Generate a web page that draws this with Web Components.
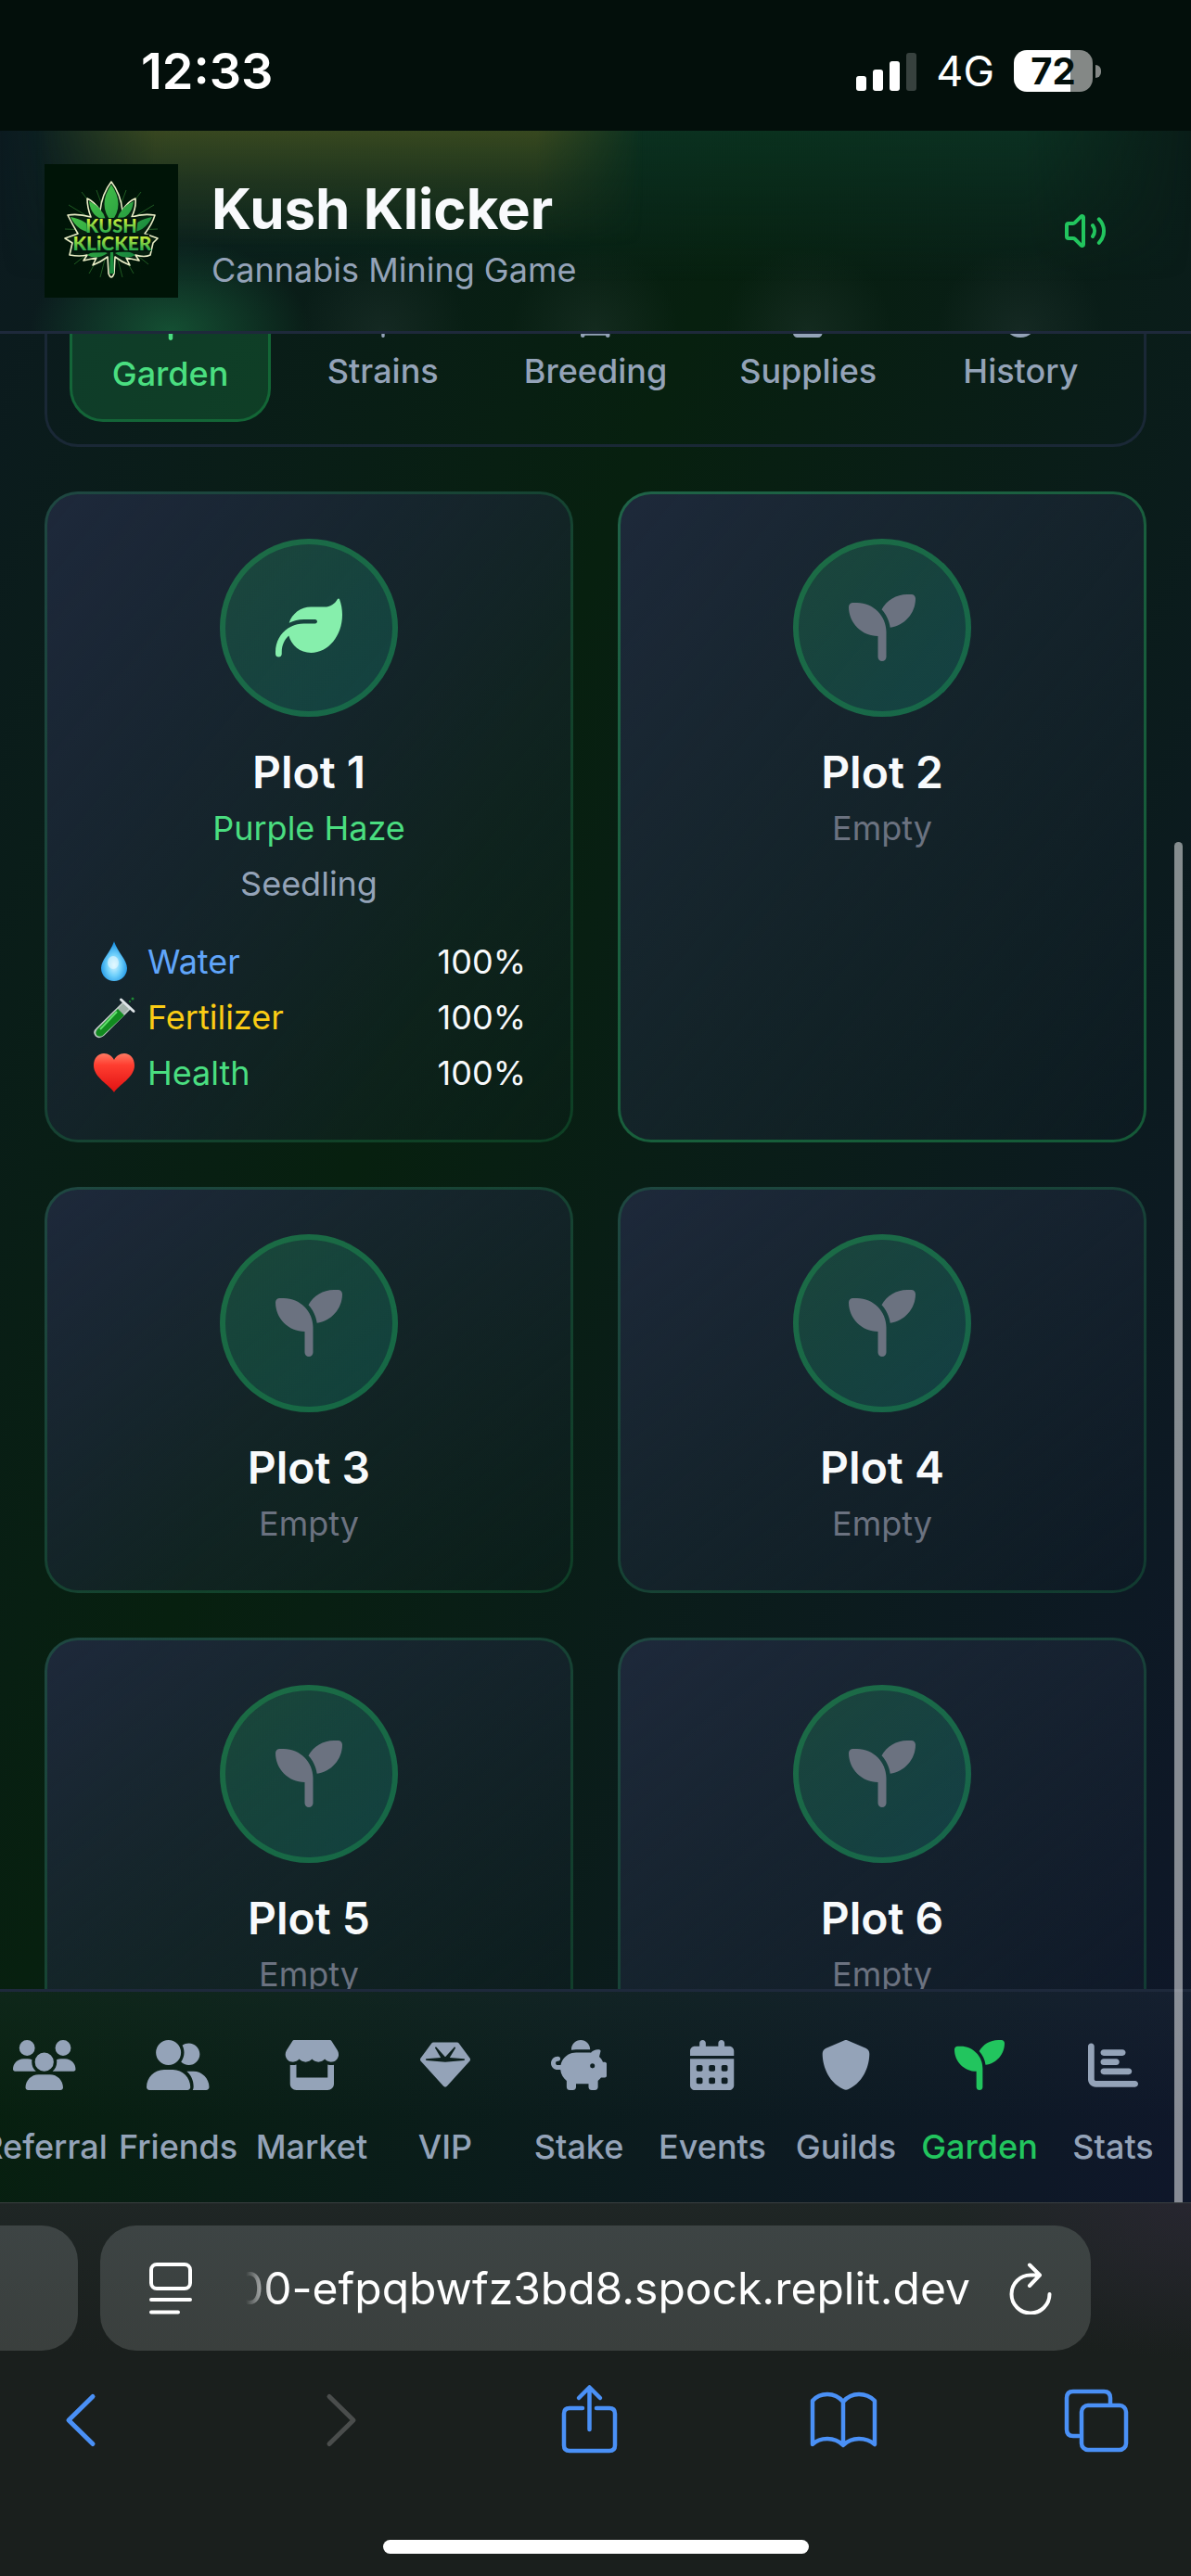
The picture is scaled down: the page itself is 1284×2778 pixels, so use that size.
<!DOCTYPE html>
<html lang="en">
<head>
<meta charset="utf-8">
<meta name="viewport" content="width=device-width, initial-scale=1">
<title>Kush Klicker</title>
<style>
  html, body { margin: 0; height: 100%; }
  body { background: #030f0b; font-family: Inter, "Noto Sans", sans-serif; color: #f8fafc; }
</style>
</head>
<body>
<kk-app></kk-app>

<script>
const FA = {
  seedling: [512, 'M512 32c0 113.6-84.6 207.5-194.2 222c-7.1-53.4-30.6-101.6-65.3-139.3C290.8 46.3 364 0 448 0h32c17.7 0 32 14.3 32 32zM0 96C0 78.3 14.3 64 32 64H64c123.7 0 224 100.3 224 224v32V480c0 17.7-14.3 32-32 32s-32-14.3-32-32V320C100.3 320 0 219.7 0 96z'],
  leaf: [512, 'M272 96c-78.6 0-145.1 51.5-167.7 122.5c33.6-17 71.5-26.5 111.7-26.5h88c8.8 0 16 7.2 16 16s-7.2 16-16 16H216c-16.6 0-32.7 1.9-48.3 5.4c-25.9 5.9-49.9 16.4-71.4 30.7C38.3 298.8 0 364.9 0 440v16c0 13.3 10.7 24 24 24s24-10.7 24-24V440c0-48.7 20.7-92.5 53.8-123.2C121.6 392.3 190.3 448 272 448l1 0c132.1-.7 239-130.9 239-291.4c0-42.6-7.5-83.1-21.1-119.6c-2.6-6.9-12.7-6.6-16.2-.1C455.9 72.1 418.7 96 376 96L272 96z'],
  gem: [512, 'M116.7 33.8c4.5-6.1 11.7-9.8 19.3-9.8H376c7.6 0 14.8 3.6 19.3 9.8l112 152c6.8 9.2 6.1 21.9-1.5 30.4l-232 256c-4.5 5-11 7.9-17.8 7.9s-13.2-2.9-17.8-7.9l-232-256c-7.7-8.5-8.3-21.2-1.5-30.4l112-152zm38.5 39.8c-3.3 2.5-4.2 7-2.1 10.5l57.4 95.6L63.3 192c-4.1 .3-7.3 3.8-7.3 8s3.2 7.6 7.3 8l192 16c.4 0 .9 0 1.3 0l192-16c4.1-.3 7.3-3.8 7.3-8s-3.2-7.6-7.3-8L301.5 179.8l57.4-95.6c2.1-3.5 1.2-8.1-2.1-10.5s-7.9-2-10.7 1L256 172.2 165.9 74.6c-2.8-3-7.4-3.4-10.7-1z'],
  shield: [512, 'M269.4 2.9C265.2 1 260.7 0 256 0s-9.2 1-13.4 2.9L54.3 82.8c-22 9.3-38.4 31-38.3 57.2c.5 99.2 41.3 280.7 213.6 363.2c16.7 8 36.1 8 52.8 0C454.7 420.7 495.5 239.2 496 140c.1-26.2-16.3-47.9-38.3-57.2L269.4 2.9z'],
  calendar: [448, 'M128 0c17.7 0 32 14.3 32 32V64H288V32c0-17.7 14.3-32 32-32s32 14.3 32 32V64h48c26.5 0 48 21.5 48 48v48H0V112C0 85.5 21.5 64 48 64H96V32c0-17.7 14.3-32 32-32zM0 192H448V464c0 26.5-21.5 48-48 48H48c-26.5 0-48-21.5-48-48V192zm64 80v32c0 8.8 7.2 16 16 16h32c8.8 0 16-7.2 16-16V272c0-8.8-7.2-16-16-16H80c-8.8 0-16 7.2-16 16zm128 0v32c0 8.8 7.2 16 16 16h32c8.8 0 16-7.2 16-16V272c0-8.8-7.2-16-16-16H208c-8.8 0-16 7.2-16 16zm144-16c-8.8 0-16 7.2-16 16v32c0 8.8 7.2 16 16 16h32c8.8 0 16-7.2 16-16V272c0-8.8-7.2-16-16-16H336zM64 400v32c0 8.8 7.2 16 16 16h32c8.8 0 16-7.2 16-16V400c0-8.8-7.2-16-16-16H80c-8.8 0-16 7.2-16 16zm144-16c-8.8 0-16 7.2-16 16v32c0 8.8 7.2 16 16 16h32c8.8 0 16-7.2 16-16V400c0-8.8-7.2-16-16-16H208zm112 16v32c0 8.8 7.2 16 16 16h32c8.8 0 16-7.2 16-16V400c0-8.8-7.2-16-16-16H336c-8.8 0-16 7.2-16 16z'],
  chart: [512, 'M32 32c17.7 0 32 14.3 32 32V400c0 8.8 7.2 16 16 16H480c17.7 0 32 14.3 32 32s-14.3 32-32 32H80c-44.2 0-80-35.8-80-80V64C0 46.3 14.3 32 32 32zm96 96c0-17.7 14.3-32 32-32l192 0c17.7 0 32 14.3 32 32s-14.3 32-32 32l-192 0c-17.7 0-32-14.3-32-32zm32 64H288c17.7 0 32 14.3 32 32s-14.3 32-32 32H160c-17.7 0-32-14.3-32-32s14.3-32 32-32zm0 96H416c17.7 0 32 14.3 32 32s-14.3 32-32 32H160c-17.7 0-32-14.3-32-32s14.3-32 32-32z'],
  friends: [640, 'M96 128a128 128 0 1 1 256 0A128 128 0 1 1 96 128zM0 482.3C0 383.8 79.8 304 178.3 304h91.4C368.2 304 448 383.8 448 482.3c0 16.4-13.3 29.7-29.7 29.7H29.7C13.3 512 0 498.7 0 482.3zM609.3 512H471.4c5.4-9.4 8.6-20.3 8.6-32v-8c0-60.7-27.1-115.2-69.8-151.8c2.4-.1 4.7-.2 7.1-.2h61.4C567.8 320 640 392.2 640 481.3c0 17-13.8 30.7-30.7 30.7zM432 256c-31 0-59-12.6-79.3-32.9C372.4 196.5 384 163.6 384 128c0-26.8-6.6-52.1-18.3-74.3C384.3 40.1 407.2 32 432 32c61.9 0 112 50.1 112 112s-50.1 112-112 112z'],
  users: [640, 'M144 0a80 80 0 1 1 0 160A80 80 0 1 1 144 0zM512 0a80 80 0 1 1 0 160A80 80 0 1 1 512 0zM0 298.7C0 239.8 47.8 192 106.7 192h42.7c15.9 0 31 3.5 44.6 9.7c-1.3 7.2-1.9 14.7-1.9 22.3c0 38.2 16.8 72.5 43.3 96c-.2 0-.4 0-.7 0H21.3C9.6 320 0 310.4 0 298.7zM405.3 320c-.2 0-.4 0-.7 0c26.6-23.5 43.3-57.8 43.3-96c0-7.6-.7-15-1.9-22.3c13.6-6.3 28.7-9.7 44.6-9.7h42.7C592.2 192 640 239.8 640 298.7c0 11.8-9.6 21.3-21.3 21.3H405.3zM224 224a96 96 0 1 1 192 0 96 96 0 1 1 -192 0zM128 485.3C128 411.7 187.7 352 261.3 352H378.7C452.3 352 512 411.7 512 485.3c0 14.7-11.9 26.7-26.7 26.7H154.7c-14.7 0-26.7-11.9-26.7-26.7z'],
  store: [576, 'M547.6 103.8L490.3 13.1C485.2 5 476.1 0 466.4 0H109.6C99.9 0 90.8 5 85.7 13.1L28.3 103.8c-29.6 46.8-3.4 111.9 51.9 119.4c4 .5 8.1 .8 12.1 .8c26.1 0 49.3-11.4 65.2-29c15.9 17.6 39.1 29 65.2 29c26.1 0 49.3-11.4 65.2-29c15.9 17.6 39.1 29 65.2 29c26.2 0 49.3-11.4 65.2-29c16 17.6 39.1 29 65.2 29c4.1 0 8.1-.3 12.1-.8c55.5-7.4 81.8-72.5 52.1-119.4zM499.7 254.9l-.1 0c-5.3 .7-10.7 1.1-16.2 1.1c-12.4 0-24.3-1.9-35.4-5.3V384H128V250.6c-11.2 3.5-23.2 5.4-35.6 5.4c-5.5 0-11-.4-16.3-1.1l-.1 0c-4.1-.6-8.1-1.3-12-2.3V384v64c0 35.3 28.7 64 64 64H448c35.3 0 64-28.7 64-64V384 252.6c-4 1-8 1.8-12.3 2.3z'],
  piggy: [576, 'M400 96l0 .7c-5.3-.4-10.6-.7-16-.7H256c-16.5 0-32.5 2.1-47.8 6c-.1-2-.2-4-.2-6c0-53 43-96 96-96s96 43 96 96zm-16 32c3.5 0 7 .1 10.4 .3c4.2 .3 8.4 .7 12.6 1.3C424.6 109.1 450.8 96 480 96h11.5c10.4 0 18 9.8 15.5 19.9l-13.8 55.2c15.8 14.8 28.7 32.8 37.5 52.9H544c17.7 0 32 14.3 32 32v96c0 17.7-14.3 32-32 32H512c-9.1 12.1-19.9 22.9-32 32v64c0 17.7-14.3 32-32 32H416c-17.7 0-32-14.3-32-32V448H256v32c0 17.7-14.3 32-32 32H192c-17.7 0-32-14.3-32-32V416c-34.9-26.2-58.7-66.3-63.2-112H68c-37.6 0-68-30.4-68-68s30.4-68 68-68h4c13.3 0 24 10.7 24 24s-10.7 24-24 24H68c-11 0-20 9-20 20s9 20 20 20H99.2c12.1-59.8 57.7-107.5 116.3-122.8c12.9-3.4 26.5-5.2 40.5-5.2H384zm64 136a24 24 0 1 0 -48 0 24 24 0 1 0 48 0z'],
  cannabis: [512, 'M256 0C285 50 304 120 300 200C340 150 400 110 450 100C440 160 400 230 350 270C410 270 460 290 500 320C450 350 390 360 330 345C345 365 360 395 365 420C330 415 300 395 280 370V490C280 520 232 520 232 490V370C212 395 182 415 147 420C152 395 167 365 182 345C122 360 62 350 12 320C52 290 102 270 162 270C112 230 72 160 62 100C112 110 172 150 212 200C208 120 227 50 256 0z'],
  dna: [448, 'M0 32C0-10 64-10 64 32H384C384-10 448-10 448 32C448 140 380 210 300 256C380 302 448 372 448 480C448 522 384 522 384 480H64C64 522 0 522 0 480C0 372 68 302 148 256C68 210 0 140 0 32zM90 96C120 150 170 190 224 220C278 190 328 150 358 96zM224 292C170 322 120 362 85 448H363C328 362 278 322 224 292z'],
  bottle: [448, 'M40 0H408C430 0 448 18 448 40V88C448 110 430 128 408 128H40C18 128 0 110 0 88V40C0 18 18 0 40 0zM0 160H448V448C448 483 419 512 384 512H64C29 512 0 483 0 448z'],
  clock: [512, 'M256 0a256 256 0 1 1 0 512A256 256 0 1 1 256 0zM232 120V256c0 8 4 15.5 10.7 20l96 64c11 7.400 26 4.400 33.300-6.700s4.400-26-6.700-33.300L280 243.200V120c0-13.300-10.700-24-24-24s-24 10.700-24 24z']
};

const LINE = {
  volume: ['0 0 24 24', '<path d="M11 4.700a.7.7 0 0 0-1.200-.500L6.400 7.600A1.400 1.400 0 0 1 5.400 8H3a1 1 0 0 0-1 1v6a1 1 0 0 0 1 1h2.400a1.400 1.400 0 0 1 1 .400l3.400 3.400a.7.7 0 0 0 1.200-.500zM16 9a5 5 0 0 1 0 6M19.400 18.400a9 9 0 0 0 0-12.700" stroke-width="2"/>'],
  reader: ['0 0 46 56', '<rect x="2" y="2" width="42" height="26" rx="6" stroke-width="4"/><path d="M2 40H44M2 53.500H31" stroke-width="4"/>'],
  reload: ['0 0 46 56', '<path d="M29 13.500H23A20.500 20.500 0 1 0 43.500 34M22 2.500L33 13.500L22 25" stroke-width="4"/>'],
  back: ['0 0 80 80', '<path d="M53 14.500L27 40L53 65.500" stroke-width="5"/>'],
  forward: ['0 0 80 80', '<path d="M34 14.500L60 40L34 65.500" stroke-width="5"/>'],
  share: ['0 0 80 80', '<path d="M34 27H20Q14 27 14 33V67Q14 73 20 73H63Q69 73 69 67V33Q69 27 63 27H49M41.500 50V5M30 16L41.500 4.500L53 16" stroke-width="4.500"/>'],
  book: ['0 0 80 80', '<path d="M41 20Q34 12 24 12Q14 12 8 19V66Q14 60 24 60Q34 60 41 67Q48 60 58 60Q68 60 75 66V19Q68 12 58 12Q48 12 41 20V66" stroke-width="4.500"/>'],
  tabs: ['0 0 80 80', '<path d="M22 57H16Q9 57 9 50V16Q9 9 16 9H49Q56 9 56 16V23"  stroke-width="4.500"/><rect x="25" y="24" width="48" height="48" rx="7" stroke-width="4.500"/>']
};

const ART = {
  drop: '<svg viewBox="0 0 48 48"><defs><radialGradient id="g" cx=".5" cy=".6" r=".6"><stop offset="0" stop-color="#d9f6ff"/><stop offset=".45" stop-color="#6fd0fb"/><stop offset="1" stop-color="#0a86e0"/></radialGradient></defs><path d="M24 2C27 13 38 22 38 31A14 14 0 0 1 10 31C10 22 21 13 24 2z" fill="url(#g)"/><ellipse cx="23" cy="25" rx="6" ry="7" fill="#eafaff" opacity=".6"/></svg>',
  tube: '<svg viewBox="0 0 48 48"><path d="M34 8L41 15L12.500 43.500Q8 47 4.500 44Q1 40 5 36.500z" fill="#9fb0a8" stroke="#c4cfca" stroke-width="1.500"/><path d="M28 15L35 22L12 43.500Q8.500 46 5.500 43.500Q3 41 6 37z" fill="#118a1f"/><path d="M27 18L9 37" stroke="#5fe06a" stroke-width="2" fill="none"/><path d="M31.500 5L45 17.500" stroke="#dfe5e8" stroke-width="3" stroke-linecap="round"/><circle cx="44" cy="4" r="1.500" fill="#1f8a34"/><circle cx="41" cy="7" r="1" fill="#1f8a34"/></svg>',
  heart: '<svg viewBox="0 0 48 48"><defs><linearGradient id="h" x1="0" y1="0" x2="0" y2="1"><stop offset="0" stop-color="#ff7a62"/><stop offset=".3" stop-color="#ff3d30"/><stop offset="1" stop-color="#e01212"/></linearGradient></defs><path d="M24 45C19 37 2 29 2 16C2 8 7 3 13 3C18 3 22 6 24 10C26 6 30 3 35 3C41 3 46 8 46 16C46 29 29 37 24 45z" fill="url(#h)"/></svg>'
};

function define(name, html, setup) {
  const tpl = document.createElement('template');
  customElements.define(name, class extends HTMLElement {
    constructor() {
      super();
      this.attachShadow({ mode: 'open' });
    }
    connectedCallback() {
      tpl.innerHTML = '<style>*{box-sizing:border-box}</style>' + (typeof html === 'function' ? html(this) : html);
      this.shadowRoot.replaceChildren(tpl.content.cloneNode(true));
      if (setup) setup(this.shadowRoot, this);
    }
  });
}

define('kk-icon', el => {
  const name = el.getAttribute('name');
  const css = '<style>:host{display:flex;flex:none}svg{display:block;height:var(--icon-size,54px);width:auto}</style>';
  if (FA[name]) {
    return css + `<svg viewBox="0 0 ${FA[name][0]} 512" fill="currentColor" fill-rule="evenodd" aria-hidden="true"><path d="${FA[name][1]}"/></svg>`;
  }
  if (ART[name]) return css + ART[name];
  return css + `<svg viewBox="${LINE[name][0]}" fill="none" stroke="currentColor" stroke-linecap="round" stroke-linejoin="round" aria-hidden="true">${LINE[name][1]}</svg>`;
});

define('kk-logo', `
<style>
  :host { display: block; flex: none; width: 144px; height: 144px; background: #001407; }
  svg { display: block; width: 100%; height: 100%; }
  text { font-family: Lato, Inter, sans-serif; font-weight: 900; text-anchor: middle; }
</style>
<svg viewBox="0 0 144 144" role="img" aria-label="Kush Klicker logo">
  <defs>
    <linearGradient id="l" x1="0" y1="0" x2="1" y2="1"><stop offset="0" stop-color="#4fd04a"/><stop offset="1" stop-color="#08733a"/></linearGradient>
    <linearGradient id="t" x1="0" y1="0" x2="0" y2="1"><stop offset=".25" stop-color="#c9ee3c"/><stop offset=".8" stop-color="#2fae4c"/></linearGradient>
    <radialGradient id="b"><stop offset="0" stop-color="#0b3a15"/><stop offset="1" stop-color="#001407" stop-opacity="0"/></radialGradient>
  </defs>
  <circle cx="72" cy="74" r="58" fill="url(#b)" opacity=".5"/>
  <path d="M72 72L88 28M72 72L56 28M72 72L104 30M72 72L40 30M72 72L118 44M72 72L26 44M72 72L122 70M72 72L22 70M72 76L112 108M72 76L32 108M72 76L96 118M72 76L48 118M72 76L84 122M72 76L60 122" stroke="#1f5a22" stroke-width="1"/>
  <g stroke="#e9edc6" stroke-width="1.600" stroke-linejoin="round" fill="#07210f">
    <path d="M72 19Q62 32 60 50Q53 40 46 37Q46 47 50 57Q36 53 25 55Q30 65 36 75L22 80L30 85L27 98Q38 100 46 98L42 104L56 101L52 109Q60 106 68 100L69 118Q72 126 75 118L76 100Q84 106 92 109L88 101L102 104L98 98Q108 101 114 98L117 85L122 80L108 75Q116 65 119 55Q106 53 94 57Q99 47 98 37Q90 40 84 50Q82 32 72 19z"/>
  </g>
  <g fill="url(#l)">
    <path d="M72 22Q57 44 72 62Q87 44 72 22zM48 40Q50 58 66 60Q62 46 48 40zM96 40Q94 58 78 60Q82 46 96 40zM28 57Q36 74 54 74Q46 60 28 57zM116 57Q108 74 90 74Q98 60 116 57zM46 98Q58 90 68 96Q56 104 46 98zM98 98Q86 90 76 96Q88 104 98 98zM71 94h3l1 24h-5z"/>
  </g>
  <path d="M45 59L101 57L99 75L113 76L115 94L30 96L32 78L46 75z" fill="#03180d"/>
  <text x="72" y="74" font-size="20" fill="url(#t)">KUSH</text>
  <text x="73" y="93" font-size="21" fill="url(#t)">KLiCKER</text>
</svg>`);

define('kk-status-bar', `
<style>
  :host { display: flex; align-items: center; justify-content: space-between; height: 141px; flex: none; padding: 12px 97px 0 152px; color: #fff; background: #030f0b; }
  time { font-size: 54px; line-height: 60px; font-weight: 600; }
  .right { display: flex; align-items: center; gap: 21px; }
  .bars { display: flex; align-items: flex-end; gap: 7px; height: 42px; }
  .bars i { width: 11px; border-radius: 3px; background: #fff; }
  .bars i:nth-child(1) { height: 16px } .bars i:nth-child(2) { height: 23px }
  .bars i:nth-child(3) { height: 32px } .bars i:nth-child(4) { height: 41px; background: #37413e }
  .net { font-size: 45px; line-height: 48px; font-weight: 400; }
  .batt { display: flex; align-items: center; gap: 3px; }
  .cell { display: flex; align-items: center; justify-content: center; width: 85px; height: 45px; border-radius: 14px; background: linear-gradient(90deg, #fff 72%, #848886 72%); color: #030f0b; font-size: 40px; line-height: 45px; font-weight: 700; }
  .nub { width: 6px; height: 14px; border-radius: 0 7px 7px 0; background: #848886; }
</style>
<time>12:33</time>
<div class="right">
  <div class="bars"><i></i><i></i><i></i><i></i></div>
  <span class="net">4G</span>
  <div class="batt"><span class="cell">72</span><span class="nub"></span></div>
</div>`);

define('kk-header', `
<style>
  :host { display: flex; align-items: center; gap: 36px; flex: none; padding: 36px 48px; border-bottom: 3px solid #1e293b; position: relative;
    background:
      radial-gradient(ellipse 150px 100px at 183px 100%, rgba(30,130,75,.5), transparent),
      radial-gradient(ellipse 90px 90px at 412px 100%, rgba(90,110,110,.14), transparent),
      radial-gradient(ellipse 90px 90px at 641px 100%, rgba(90,110,110,.14), transparent),
      radial-gradient(ellipse 90px 90px at 871px 100%, rgba(90,110,110,.14), transparent),
      radial-gradient(ellipse 90px 90px at 1100px 100%, rgba(90,110,110,.14), transparent); }
  :host::before, :host::after { content: ""; position: absolute; inset: 0; pointer-events: none; }
  :host::before { background: linear-gradient(180deg, rgba(14,66,46,.5), rgba(12,56,40,.35) 35%, transparent 75%);
    -webkit-mask-image: linear-gradient(90deg, transparent, #000 14%, #000 86%, transparent);
    mask-image: linear-gradient(90deg, transparent, #000 14%, #000 86%, transparent); }
  :host::after { background: linear-gradient(180deg, rgba(78,84,30,.66), rgba(64,72,30,.4) 25%, transparent 58%);
    -webkit-mask-image: linear-gradient(90deg, transparent 3%, #000 13%, #000 45%, transparent 54%);
    mask-image: linear-gradient(90deg, transparent 3%, #000 13%, #000 45%, transparent 54%); }
  kk-logo, .titles, button { position: relative; z-index: 1; }
  .titles { flex: 1; min-width: 0; }
  h1 { margin: 0; font-size: 60px; line-height: 84px; font-weight: 700; color: #f8fafc; }
  p { margin: 0; font-size: 36px; line-height: 48px; color: #94a3b8; }
  button { border: 0; background: none; padding: 36px 42px; color: #22c55e; --icon-size: 48px; }
</style>
<kk-logo></kk-logo>
<div class="titles"><h1>Kush Klicker</h1><p>Cannabis Mining Game</p></div>
<button aria-label="Sound"><kk-icon name="volume"></kk-icon></button>`);

define('kk-tab', el => `
<style>
  :host { display: flex; min-width: 0; --icon-size: 36px; }
  button { flex: 1; display: flex; flex-direction: column; align-items: center; gap: 12px; margin: 0; padding: 23px 0 25px; border: 0; border-radius: 36px; background: none; color: #94a3b8; font: 500 36px/48px Inter, "Noto Sans", sans-serif; }
  :host([active]) button { background: rgba(34,197,94,.2); border: 3px solid rgba(34,197,94,.3); color: #4ade80; }
</style>
<button><kk-icon name="${el.getAttribute('icon')}"></kk-icon><slot></slot></button>`);

define('kk-tabs', `
<style>
  :host { display: grid; grid-template-columns: repeat(5, 1fr); gap: 12px; padding: 24px; border: 3px solid #1a2836; border-radius: 36px; }
</style>
<slot></slot>`);

define('kk-stat', el => `
<style>
  :host { display: flex; align-items: center; justify-content: space-between; --icon-size: 48px; font-size: 36px; line-height: 48px; }
  .label { display: flex; gap: 12px; color: ${el.getAttribute('color')}; }
</style>
<span class="label"><kk-icon name="${el.getAttribute('icon')}"></kk-icon><slot></slot></span>
<span>${el.getAttribute('value')}</span>`);

define('kk-plot', el => `
<style>
  :host { display: flex; flex-direction: column; padding: 48px; border: 3px solid rgba(34,197,94,.2); border-radius: 36px;
    background: linear-gradient(to bottom right, rgba(30,41,59,1), rgba(30,41,59,.05)) border-box; }
  :host([next]) { border-color: rgba(34,197,94,.37); }
  .disc { display: flex; align-items: center; justify-content: center; align-self: center; width: 192px; height: 192px; margin-bottom: 24px; border-radius: 50%; border: 6px solid rgba(34,197,94,.3); background: linear-gradient(to bottom right, rgba(34,197,94,.2), rgba(20,184,166,.2)) border-box; color: #6b7280; --icon-size: 72px; }
  :host([planted]) .disc { color: #86efac; }
  h2 { margin: 0; text-align: center; font-size: 48px; line-height: 72px; font-weight: 600; color: #f8fafc; }
  .sub { margin: 0; text-align: center; font-size: 36px; line-height: 48px; color: #6b7280; }
  :host([planted]) .sub { color: #4ade80; }
</style>
<div class="disc"><kk-icon name="${el.hasAttribute('planted') ? 'leaf' : 'seedling'}"></kk-icon></div>
<h2>${el.getAttribute('name')}</h2>
<p class="sub">${el.getAttribute('planted') || 'Empty'}</p>
<slot></slot>`);

define('kk-growth', el => `
<style>
  :host { display: flex; flex-direction: column; gap: 12px; margin-top: 12px; }
  p { margin: 0 0 24px; text-align: center; font-size: 36px; line-height: 48px; color: #94a3b8; }
</style>
<p>${el.getAttribute('stage')}</p>
<slot></slot>`);

define('kk-garden', `
<style>
  :host { display: block; flex: 1; min-height: 0; overflow: hidden; padding: 0 48px; }
  .plots { display: grid; grid-template-columns: 1fr 1fr; gap: 48px; margin-top: 48px; }
</style>
<kk-tabs>
  <kk-tab icon="seedling" active>Garden</kk-tab>
  <kk-tab icon="cannabis">Strains</kk-tab>
  <kk-tab icon="dna">Breeding</kk-tab>
  <kk-tab icon="bottle">Supplies</kk-tab>
  <kk-tab icon="clock">History</kk-tab>
</kk-tabs>
<div class="plots">
  <kk-plot name="Plot 1" planted="Purple Haze">
    <kk-growth stage="Seedling">
      <kk-stat icon="drop" color="#60a5fa" value="100%">Water</kk-stat>
      <kk-stat icon="tube" color="#facc15" value="100%">Fertilizer</kk-stat>
      <kk-stat icon="heart" color="#4ade80" value="100%">Health</kk-stat>
    </kk-growth>
  </kk-plot>
  <kk-plot name="Plot 2" next></kk-plot>
  <kk-plot name="Plot 3"></kk-plot>
  <kk-plot name="Plot 4"></kk-plot>
  <kk-plot name="Plot 5"></kk-plot>
  <kk-plot name="Plot 6"></kk-plot>
</div>`);

define('kk-nav-item', el => `
<style>
  :host { display: block; flex: 0 0 144px; }
  a { display: flex; flex-direction: column; align-items: center; gap: 37px; text-decoration: none; color: #94a3b8; font-size: 36px; line-height: 48px; font-weight: 500; white-space: nowrap; }
  :host([active]) a { color: #22c55e; }
</style>
<a href="#${el.getAttribute('icon')}"><kk-icon name="${el.getAttribute('icon')}"></kk-icon><slot></slot></a>`);

define('kk-nav', `
<style>
  :host { display: block; flex: none; border-top: 3px solid #1e293b; background: linear-gradient(180deg, rgba(60,80,90,.14), transparent 60%); }
  nav { display: flex; overflow: hidden; padding: 52px 24px 36px 0; }
</style>
<nav>
  <kk-nav-item icon="users">Referral</kk-nav-item>
  <kk-nav-item icon="friends">Friends</kk-nav-item>
  <kk-nav-item icon="store">Market</kk-nav-item>
  <kk-nav-item icon="gem">VIP</kk-nav-item>
  <kk-nav-item icon="piggy">Stake</kk-nav-item>
  <kk-nav-item icon="calendar">Events</kk-nav-item>
  <kk-nav-item icon="shield">Guilds</kk-nav-item>
  <kk-nav-item icon="seedling" active>Garden</kk-nav-item>
  <kk-nav-item icon="chart">Stats</kk-nav-item>
</nav>`);

define('kk-browser-bar', `
<style>
  :host { display: flex; flex-direction: column; flex: none; height: 403px; border-top: 1px solid #3a3f40; background:
    radial-gradient(ellipse 260px 170px at 100% 0, rgba(44,38,54,.6), transparent),
    linear-gradient(180deg, #1f2625, #1a1f1d 40%); }
  .pills { display: flex; gap: 24px; padding-right: 108px; margin-top: 24px; }
  .prev { width: 84px; border-radius: 0 39px 39px 0; }
  .pill { background: linear-gradient(180deg, #3d4444, #3a3f3d); height: 135px; }
  .url { flex: 1; min-width: 0; display: flex; align-items: center; justify-content: space-between; padding: 0 42px 0 53px; border-radius: 39px; color: #fff; --icon-size: 56px; }
  button { border: 0; margin: 0; padding: 0; background: none; color: inherit; }
  .host { flex: 1; display: flex; justify-content: flex-end; overflow: hidden; margin: 0 42px 0 58px; font: 400 48px/72px Inter, "Noto Sans", sans-serif; white-space: nowrap;
    -webkit-mask-image: linear-gradient(90deg, transparent, #000 30px); mask-image: linear-gradient(90deg, transparent, #000 30px); }
  .tools { display: flex; justify-content: space-between; padding: 0 63px 0 47px; margin-top: 35px; color: #4a90f6; --icon-size: 80px; }
  .off { color: #4a4d4c; }
  .home { width: 459px; height: 15px; border-radius: 8px; background: #fff; margin: auto auto 24px; }
</style>
<div class="pills">
  <div class="pill prev"></div>
  <div class="pill url">
    <button aria-label="Page menu"><kk-icon name="reader"></kk-icon></button>
    <button class="host">00-efpqbwfz3bd8.spock.replit.dev</button>
    <button aria-label="Reload"><kk-icon name="reload"></kk-icon></button>
  </div>
</div>
<div class="tools">
  <button aria-label="Back"><kk-icon name="back"></kk-icon></button>
  <button aria-label="Forward" class="off" disabled><kk-icon name="forward"></kk-icon></button>
  <button aria-label="Share"><kk-icon name="share"></kk-icon></button>
  <button aria-label="Bookmarks"><kk-icon name="book"></kk-icon></button>
  <button aria-label="Tabs"><kk-icon name="tabs"></kk-icon></button>
</div>
<div class="home"></div>`);

define('kk-app', `
<style>
  :host { display: flex; flex-direction: column; height: 100vh; overflow: hidden; }
  .page { position: relative; flex: 1; min-height: 0; display: flex; flex-direction: column;
    background: linear-gradient(112deg, #0f172a -23%, #07200f 38%, #0f172a 99%); }
  .scrollbar { position: absolute; right: 9px; top: 767px; bottom: 0; width: 9px; border-radius: 5px 5px 0 0; background: rgba(255,255,255,.5); }
</style>
<kk-status-bar></kk-status-bar>
<div class="page">
  <kk-header></kk-header>
  <kk-garden></kk-garden>
  <kk-nav></kk-nav>
  <div class="scrollbar"></div>
</div>
<kk-browser-bar></kk-browser-bar>`);

const app = document.querySelector('kk-app').shadowRoot;
app.querySelector('kk-garden').scrollTop = 82;
app.querySelector('kk-nav').shadowRoot.querySelector('nav').scrollLeft = 24;
</script>
</body>
</html>
